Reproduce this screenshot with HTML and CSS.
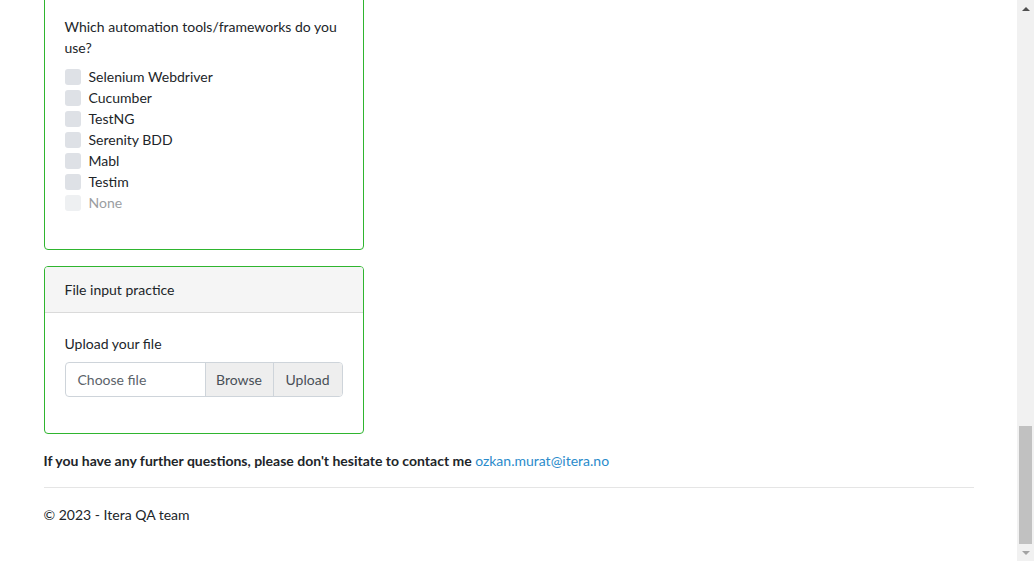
FILE: index.html
```html
<!DOCTYPE html>
<html lang="en">
<head>
<meta charset="utf-8">
<title>Itera QA practice</title>
<link rel="stylesheet" href="styles.css">
</head>
<body>
<div class="viewport">
  <div class="page">
    <div class="container">
      <div class="card">
        <div class="card-body">
          <p class="question">Which automation tools/frameworks do you use?</p>
          <ul class="checks">
            <li class="check"><span class="box"></span><span>Selenium Webdriver</span></li>
            <li class="check"><span class="box"></span><span>Cucumber</span></li>
            <li class="check"><span class="box"></span><span>TestNG</span></li>
            <li class="check"><span class="box"></span><span>Serenity BDD</span></li>
            <li class="check"><span class="box"></span><span>Mabl</span></li>
            <li class="check"><span class="box"></span><span>Testim</span></li>
            <li class="check disabled"><span class="box"></span><span>None</span></li>
          </ul>
        </div>
      </div>

      <div class="card">
        <div class="card-header">File input practice</div>
        <div class="card-body">
          <div class="label">Upload your file</div>
          <div class="input-group">
            <div class="file-field">Choose file</div>
            <div class="btn browse">Browse</div>
            <div class="btn upload">Upload</div>
          </div>
        </div>
      </div>

      <p class="contact">If you have any further questions, please don't hesitate to contact me <a class="mail" href="#">ozkan.murat@itera.no</a></p>
      <hr class="rule">
      <footer class="footer">© 2023 - Itera QA team</footer>
    </div>
  </div>
  <div class="scrollbar">
    <div class="sb-btn"><span class="arrow up"></span></div>
    <div class="sb-track"><div class="sb-thumb"></div></div>
    <div class="sb-btn"><span class="arrow down"></span></div>
  </div>
</div>
</body>
</html>
```

FILE: styles.css
```css
html, body {
  margin: 0;
  padding: 0;
  background: #ffffff;
}

body {
  font-family: Lato, "Open Sans", sans-serif;
  font-size: 14px;
  line-height: 21px;
  color: #212529;
}

.viewport {
  display: flex;
  height: 561px;
  overflow: hidden;
}

.page {
  flex: 1;
  display: flex;
  flex-direction: column;
  justify-content: flex-end;
  overflow: hidden;
}

.container {
  width: 930px;
  margin: 0 auto;
  padding-bottom: 36px;
}

.card {
  width: 318px;
  border: 1px solid #2fb52f;
  border-radius: 4px;
  margin-bottom: 16px;
  overflow: hidden;
}

.card-header {
  background: #f5f5f5;
  border-bottom: 1px solid #dadada;
  padding: 12px 20px;
}

.card-body {
  padding: 20px 20px 36px;
}

.question {
  margin: 0 0 8px;
  padding-top: 40px;
}

.checks {
  list-style: none;
  margin: 0;
  padding: 0;
}

.check {
  display: flex;
  align-items: center;
  gap: 8px;
  height: 21px;
}

.box {
  width: 16px;
  height: 16px;
  border-radius: 3px;
  background: #dee1e6;
  flex: none;
}

.check.disabled {
  color: #9b9ea2;
}

.check.disabled .box {
  background: #eef0f2;
}

.label {
  margin-bottom: 8px;
}

.input-group {
  display: flex;
  height: 35px;
  border: 1px solid #ced4da;
  border-radius: 4px;
  overflow: hidden;
  box-sizing: border-box;
}

.file-field {
  width: 140px;
  padding: 0 12px;
  box-sizing: border-box;
  display: flex;
  align-items: center;
  color: #5c636a;
  border-right: 1px solid #ced4da;
}

.btn {
  display: flex;
  align-items: center;
  justify-content: center;
  background: #eeeeee;
  color: #495057;
}

.browse {
  width: 67px;
  border-right: 1px solid #ced4da;
}

.upload {
  flex: 1;
}

.contact {
  margin: 0 0 16px;
  font-weight: 700;
}

.mail {
  font-weight: 400;
  color: #2a8bcb;
  text-decoration: none;
}

.rule {
  margin: 0 0 16px;
  border: 0;
  border-top: 1px solid #e5e5e5;
  height: 0;
}

.footer {
  display: block;
}

.scrollbar {
  width: 17px;
  flex: none;
  background: #f1f1f1;
  display: flex;
  flex-direction: column;
}

.sb-btn {
  height: 17px;
  display: flex;
  align-items: center;
  justify-content: center;
}

.arrow {
  width: 0;
  height: 0;
  border-left: 4px solid transparent;
  border-right: 4px solid transparent;
}

.arrow.up {
  border-bottom: 4px solid #505050;
}

.arrow.down {
  border-top: 4px solid #a3a3a3;
}

.sb-track {
  flex: 1;
  display: flex;
  flex-direction: column;
  justify-content: flex-end;
}

.sb-thumb {
  height: 118px;
  margin: 0 2px;
  background: #c1c1c1;
}
```
